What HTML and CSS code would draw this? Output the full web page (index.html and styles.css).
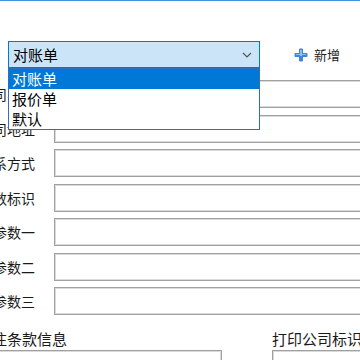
FILE: index.html
```html
<!DOCTYPE html>
<html lang="zh-CN">
<head>
  <meta charset="UTF-8">
  <title>打印设置</title>
  <link rel="stylesheet" href="styles.css">
</head>
<body>

  <div class="topline"></div>

  <div class="toolbar">
    <div class="combo">
      <div class="combo-box">
        <span>对账单</span>
        <svg class="chev" width="10" height="6" viewBox="0 0 10 6"><path d="M1 1 L5 5 L9 1" fill="none" stroke="#555" stroke-width="1.2"/></svg>
      </div>
      <ul class="combo-list">
        <li class="sel">对账单</li>
        <li>报价单</li>
        <li>默认</li>
      </ul>
    </div>
    <button class="add-btn">
      <svg width="14" height="14" viewBox="0 0 14 14">
        <path d="M5 1.5 Q5 0.5 6 0.5 H8 Q9 0.5 9 1.5 V5 H12.5 Q13.5 5 13.5 6 V8 Q13.5 9 12.5 9 H9 V12.5 Q9 13.5 8 13.5 H6 Q5 13.5 5 12.5 V9 H1.5 Q0.5 9 0.5 8 V6 Q0.5 5 1.5 5 H5 Z" fill="#3f86d4"/>
        <path d="M6 2 H8 V6 H12 V7 H8 V8 H6 V7 H2 V6 H6 Z" fill="#8cc0f0"/>
      </svg>
      新增
    </button>
  </div>

  <div class="form">
    <div class="row"><div class="lbl"><span>公司名称</span></div><div class="field"></div></div>
    <div class="row"><div class="lbl"><span>公司地址</span></div><div class="field"></div></div>
    <div class="row"><div class="lbl"><span>联系方式</span></div><div class="field"></div></div>
    <div class="row"><div class="lbl"><span>参数标识</span></div><div class="field"></div></div>
    <div class="row"><div class="lbl"><span>参数一</span></div><div class="field"></div></div>
    <div class="row"><div class="lbl"><span>参数二</span></div><div class="field"></div></div>
    <div class="row"><div class="lbl"><span>参数三</span></div><div class="field"></div></div>
  </div>

  <div class="sections">
    <div class="sec sec-left">
      <div class="sec-title"><span>备注条款信息</span></div>
      <div class="box"></div>
    </div>
    <div class="sec sec-right">
      <div class="sec-title"><span>打印公司标识</span></div>
      <div class="box"></div>
    </div>
  </div>

</body>
</html>
```

FILE: styles.css
```css
html, body { margin: 0; padding: 0; background: #fff; overflow: hidden; }
body { font-family: "Noto Sans CJK SC", "Noto Sans", sans-serif; color: #1a1a1a; width: 360px; height: 360px; }

.topline { height: 1px; background: #3d95df; }

.toolbar { display: flex; align-items: center; margin-top: 40px; padding-left: 8px; height: 27px; }
.combo { position: relative; width: 252px; }
.combo-box { box-sizing: border-box; height: 27px; display: flex; align-items: center; justify-content: space-between; padding: 0 7px 0 4px; background: #cce4f7; border: 1px solid #0078d7; font-size: 15px; color: #000; }
.combo-list { position: absolute; left: 0; top: 27px; width: 252px; box-sizing: border-box; margin: 0; padding: 0; list-style: none; background: #fff; border: 1px solid #2f6fb5; z-index: 5; }
.combo-list li { height: 20px; line-height: 20px; padding-left: 3px; font-size: 15px; color: #000; }
.combo-list li.sel { background: #0078d7; color: #fff; }

.add-btn { display: flex; align-items: center; gap: 6px; margin-left: 34px; padding: 0; border: 0; background: none; font-family: inherit; font-size: 13px; color: #222; }

.form { margin-top: 12px; display: flex; flex-direction: column; gap: 6.5px; }
.row { display: flex; align-items: center; gap: 19px; height: 28px; }
.lbl { width: 35px; flex: none; display: flex; justify-content: flex-end; white-space: nowrap; font-size: 14px; }
.field { box-sizing: border-box; width: 320px; flex: none; height: 28px; border: 1px solid #a0a0a0; box-shadow: inset 0 0 0 1px #dadada; background: #fff; }

.sections { display: flex; margin-top: 12px; }
.sec-title { height: 22px; display: flex; align-items: center; white-space: nowrap; font-size: 15px; }
.sec-left { width: 232px; flex: none; }
.sec-left .sec-title { justify-content: flex-end; width: 67px; }
.sec-right { margin-left: 40px; }
.box { height: 40px; margin-top: 1px; box-sizing: border-box; border: 1px solid #a0a0a0; box-shadow: inset 0 0 0 1px #dadada; }
.sec-left .box { width: 232px; margin-left: -10px; }
.sec-right .box { width: 120px; }
```
